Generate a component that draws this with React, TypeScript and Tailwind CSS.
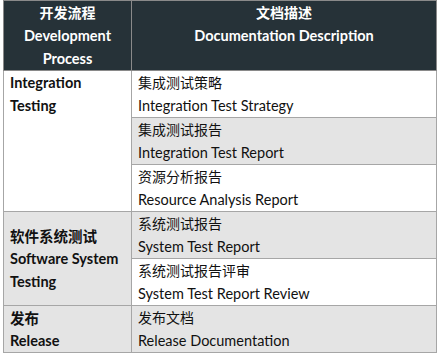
import React from "react";

const font = { fontFamily: 'Lato, "Noto Sans CJK SC", sans-serif' };

type Row = { zh: string; en: string; shaded: boolean };

function Zh({ children }: { children: React.ReactNode }) {
  return <div className="font-['Noto_Sans_CJK_SC',sans-serif]">{children}</div>;
}

function DocCell({ r }: { r: Row }) {
  return (
    <td
      className={`border border-[#a6a6a6] px-[6px] py-0 align-top text-[14px] leading-[23px] text-[#111] ${
        r.shaded ? "bg-[#e4e4e4]" : "bg-white"
      }`}
    >
      <Zh>{r.zh}</Zh>
      <div className="text-[14.5px]">{r.en}</div>
    </td>
  );
}

export default function App() {
  return (
    <div className="w-[439px] h-[359px] bg-white pl-[3px]" style={font}>
      <table className="border-collapse w-[434px] table-fixed">
        <colgroup>
          <col className="w-[128px]" />
          <col />
        </colgroup>
        <tbody>
          <tr>
            <th className="border border-[#8a8a8a] bg-[#263238] text-white font-bold text-[14px] leading-[23px] text-center align-top p-0">
              <Zh>开发流程</Zh>
              <div className="text-[14.5px]">Development</div>
              <div className="text-[14.5px]">Process</div>
            </th>
            <th className="border border-[#8a8a8a] bg-[#263238] text-white font-bold text-[14px] leading-[23px] text-center align-top p-0">
              <Zh>文档描述</Zh>
              <div className="text-[14.5px]">Documentation Description</div>
              <div>&nbsp;</div>
            </th>
          </tr>
          <tr>
            <td
              rowSpan={3}
              className="border border-[#a6a6a6] bg-white pl-[6px] pr-0 py-0 align-top font-bold text-[14.5px] leading-[23px] text-[#111]"
            >
              <div>Integration</div>
              <div>Testing</div>
            </td>
            <DocCell r={{ zh: "集成测试策略", en: "Integration Test Strategy", shaded: false }} />
          </tr>
          <tr>
            <DocCell r={{ zh: "集成测试报告", en: "Integration Test Report", shaded: true }} />
          </tr>
          <tr>
            <DocCell r={{ zh: "资源分析报告", en: "Resource Analysis Report", shaded: false }} />
          </tr>
          <tr>
            <td
              rowSpan={2}
              className="border border-[#a6a6a6] bg-[#e4e4e4] pl-[6px] pr-0 py-0 align-middle font-bold text-[14.5px] leading-[23px] text-[#111]"
            >
              <Zh>软件系统测试</Zh>
              <div className="whitespace-nowrap">Software System</div>
              <div>Testing</div>
            </td>
            <DocCell r={{ zh: "系统测试报告", en: "System Test Report", shaded: true }} />
          </tr>
          <tr>
            <DocCell r={{ zh: "系统测试报告评审", en: "System Test Report Review", shaded: false }} />
          </tr>
          <tr>
            <td className="border border-[#a6a6a6] bg-[#e4e4e4] pl-[6px] pr-0 py-0 align-top font-bold text-[14.5px] leading-[23px] text-[#111]">
              <Zh>发布</Zh>
              <div>Release</div>
            </td>
            <DocCell r={{ zh: "发布文档", en: "Release Documentation", shaded: true }} />
          </tr>
        </tbody>
      </table>
    </div>
  );
}
